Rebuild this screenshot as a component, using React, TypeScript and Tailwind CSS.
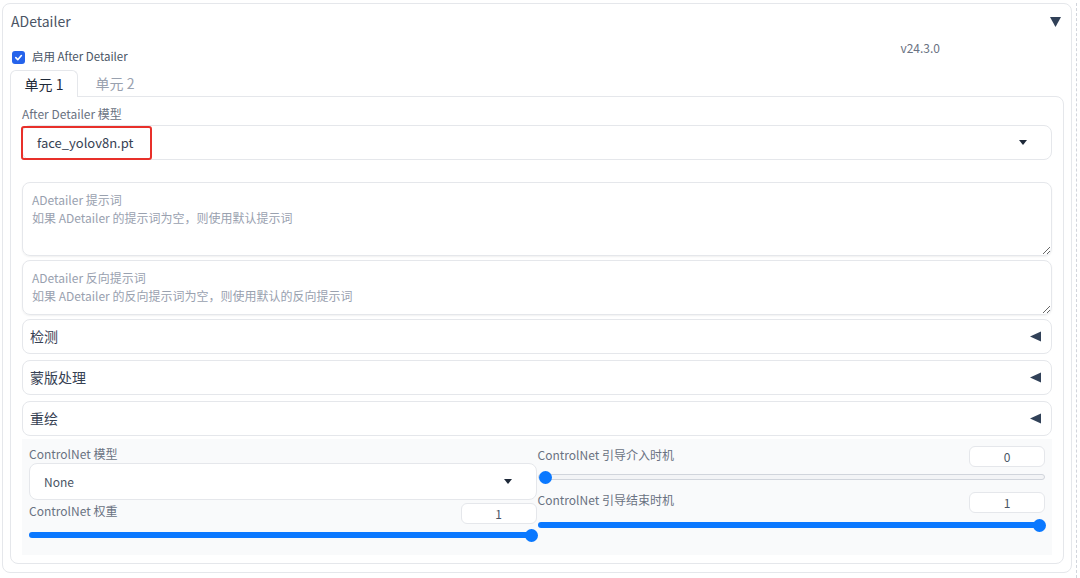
import React from "react";

const font = { fontFamily: '"Noto Sans CJK SC", "Noto Sans", sans-serif' };

function Caret() {
  return (
    <svg width="8" height="5" viewBox="0 0 8 5" className="text-gray-800">
      <path d="M0 0 L8 0 L4 5 Z" fill="currentColor" />
    </svg>
  );
}

function LeftTri() {
  return (
    <svg width="11" height="11" viewBox="0 0 11 11" className="text-slate-700">
      <path d="M11 0.5 L11 10.5 L0 5.5 Z" fill="currentColor" />
    </svg>
  );
}

function NumBox({ value }: { value: string }) {
  return (
    <div className="w-[76px] h-[21px] rounded-md border border-gray-200 bg-white flex items-center justify-center text-[12px] text-gray-600">
      {value}
    </div>
  );
}

function Slider({ full }: { full: boolean }) {
  return (
    <div className="relative h-[12px] flex items-center">
      {full ? (
        <div className="w-full h-[6px] rounded-full bg-[#0a78ff]" />
      ) : (
        <div className="w-full h-[6px] rounded-full bg-gray-100 border border-gray-300" />
      )}
      <div
        className={
          "absolute top-0 w-[13px] h-[13px] rounded-full bg-[#0a78ff] " +
          (full ? "right-[-1px]" : "left-[1px]")
        }
      />
    </div>
  );
}

function Accordion({ title }: { title: string }) {
  return (
    <div className="h-[35px] rounded-lg border border-gray-200 bg-white flex items-center justify-between pl-[7px] pr-[10px]">
      <span className="text-[14px] text-gray-700">{title}</span>
      <LeftTri />
    </div>
  );
}

export default function App() {
  return (
    <div className="w-[1080px] h-[578px] bg-white flex pt-[3px] pl-[2px] overflow-hidden" style={font}>
      <div className="w-[1070px] h-[570px] rounded-lg border border-gray-200 px-[7px] flex flex-col">
        {/* header */}
        <div className="h-[35px] flex items-center justify-between">
          <span className="text-[14px] text-gray-600 pl-[1px]">ADetailer</span>
          <svg width="11" height="10" viewBox="0 0 11 10" className="text-slate-700 mr-[3px]">
            <path d="M0 0 L11 0 L5.5 10 Z" fill="currentColor" />
          </svg>
        </div>

        {/* enable + version */}
        <div className="flex h-[31px]">
          <label className="flex items-center gap-[7px] mt-[11px] h-[14px] pl-[2px]">
            <span className="w-[13px] h-[13px] rounded-[3px] bg-[#2563eb] flex items-center justify-center">
              <svg width="9" height="9" viewBox="0 0 10 10">
                <path d="M2 5.2 L4.2 7.4 L8.2 2.8" stroke="white" strokeWidth="1.8" fill="none" strokeLinecap="round" strokeLinejoin="round" />
              </svg>
            </span>
            <span className="text-[11.5px] text-gray-600">启用 After Detailer</span>
          </label>
          <span className="ml-auto mr-[124px] mt-0 text-[12px] text-gray-500 h-[16px]">v24.3.0</span>
        </div>

        {/* tabs */}
        <div className="flex h-[27px] items-end">
          <div className="w-[68px] h-[27px] rounded-t-md border border-b-0 border-gray-200 bg-white flex items-center justify-center text-[14px] text-gray-800 relative z-10">
            单元 1
          </div>
          <div className="w-[56px] h-[27px] flex items-center justify-center text-[14px] text-gray-400 ml-[9px]">
            单元 2
          </div>
        </div>

        {/* tab panel */}
        <div className="h-[468px] -mt-[1px] rounded-b-lg rounded-tr-lg border border-gray-200 px-[11px] pt-[9px] flex flex-col">
          <div className="text-[12px] leading-[16px] text-gray-500">After Detailer 模型</div>
          <div className="relative mt-[3px] h-[35px] rounded-lg border border-gray-200 bg-white flex items-center justify-between pl-[14px] pr-[24px]">
            <span className="text-[13px] text-gray-700">face_yolov8n.pt</span>
            <Caret />
            <div className="absolute left-[-2px] top-[0px] w-[131px] h-[34px] border-2 border-[#e8302a] rounded-[3px]" />
          </div>

          <textarea
            readOnly
            className="mt-[22px] h-[74px] w-full rounded-lg border border-gray-200 shadow-[0_1px_2px_rgba(0,0,0,0.06)] px-[9px] pt-[8px] text-[12px] leading-[18px] text-gray-700 placeholder:text-gray-400 outline-none resize-y"
            style={font}
            placeholder={"ADetailer 提示词\n如果 ADetailer 的提示词为空，则使用默认提示词"}
          />
          <textarea
            readOnly
            className="mt-[4px] h-[55px] w-full rounded-lg border border-gray-200 shadow-[0_1px_2px_rgba(0,0,0,0.06)] px-[9px] pt-[8px] text-[12px] leading-[18px] text-gray-700 placeholder:text-gray-400 outline-none resize-y"
            style={font}
            placeholder={"ADetailer 反向提示词\n如果 ADetailer 的反向提示词为空，则使用默认的反向提示词"}
          />

          <div className="mt-[4px] flex flex-col gap-[6px]">
            <Accordion title="检测" />
            <Accordion title="蒙版处理" />
            <Accordion title="重绘" />
          </div>

          {/* inpaint contents */}
          <div className="mt-[3px] h-[116px] bg-gray-50 px-[7px] pt-[7px] grid grid-cols-2 gap-[1px]">
            <div className="flex flex-col">
              <div className="text-[12px] leading-[16px] text-gray-500">ControlNet 模型</div>
              <div className="mt-[1px] h-[37px] rounded-lg border border-gray-200 bg-white flex items-center justify-between pl-[14px] pr-[24px]">
                <span className="text-[12px] text-gray-600">None</span>
                <Caret />
              </div>
              <div className="mt-[3px] flex items-start justify-between h-[22px]">
                <span className="text-[12px] leading-[16px] text-gray-500">ControlNet 权重</span>
                <NumBox value="1" />
              </div>
              <div className="mt-[4px]">
                <Slider full />
              </div>
            </div>
            <div className="flex flex-col">
              <div className="flex items-start justify-between h-[21px] mt-0">
                <span className="text-[12px] leading-[16px] text-gray-500 mt-[1px]">ControlNet 引导介入时机</span>
                <NumBox value="0" />
              </div>
              <div className="mt-[4px]">
                <Slider full={false} />
              </div>
              <div className="mt-[9px] flex items-start justify-between h-[22px]">
                <span className="text-[12px] leading-[16px] text-gray-500">ControlNet 引导结束时机</span>
                <NumBox value="1" />
              </div>
              <div className="mt-[5px]">
                <Slider full />
              </div>
            </div>
          </div>
        </div>
      </div>
      <div className="ml-[4px] h-full border-l border-dashed border-gray-300" />
    </div>
  );
}
